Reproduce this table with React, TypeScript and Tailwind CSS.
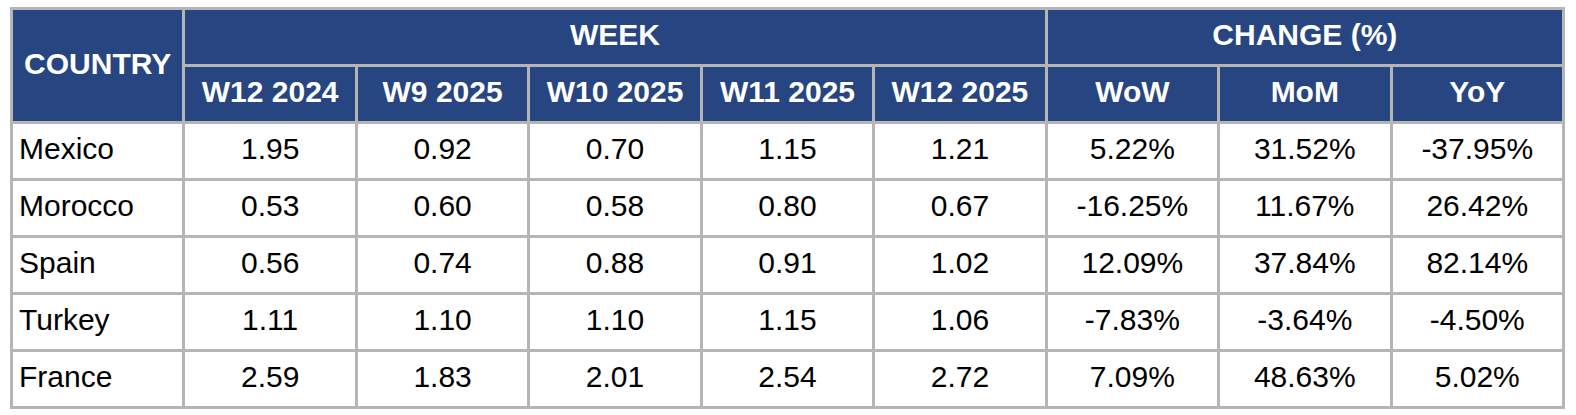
const weeks = ['W12 2024', 'W9 2025', 'W10 2025', 'W11 2025', 'W12 2025'];
const changes = ['WoW', 'MoM', 'YoY'];

const rows: [string, string[]][] = [
  ['Mexico', ['1.95', '0.92', '0.70', '1.15', '1.21', '5.22%', '31.52%', '-37.95%']],
  ['Morocco', ['0.53', '0.60', '0.58', '0.80', '0.67', '-16.25%', '11.67%', '26.42%']],
  ['Spain', ['0.56', '0.74', '0.88', '0.91', '1.02', '12.09%', '37.84%', '82.14%']],
  ['Turkey', ['1.11', '1.10', '1.10', '1.15', '1.06', '-7.83%', '-3.64%', '-4.50%']],
  ['France', ['2.59', '1.83', '2.01', '2.54', '2.72', '7.09%', '48.63%', '5.02%']],
];

const th = 'bg-[#274580] text-white font-bold text-center align-middle h-[54px] px-0 pt-0 pb-[4px]';
const td = 'bg-white text-black text-center align-middle h-[54px] px-0 pt-0 pb-[4px]';

export default function App() {
  return (
    <div className="min-h-screen bg-white pt-[7px] pl-[10px]" style={{ fontFamily: '"Liberation Sans", Arial, sans-serif' }}>
      <table className="w-[1555px] table-fixed border-separate border-spacing-[3px] bg-[#b5b5b5] text-[30px] leading-none">
        <thead>
          <tr>
            <th rowSpan={2} className={th}>COUNTRY</th>
            <th colSpan={5} className={th}>WEEK</th>
            <th colSpan={3} className={th}>CHANGE (%)</th>
          </tr>
          <tr>
            {weeks.map(w => <th key={w} className={th}>{w}</th>)}
            {changes.map(c => <th key={c} className={th}>{c}</th>)}
          </tr>
        </thead>
        <tbody>
          {rows.map(([country, vals]) => (
            <tr key={country}>
              <td className={`${td} text-left pl-[6px]`}>{country}</td>
              {vals.map((v, i) => <td key={i} className={td}>{v}</td>)}
            </tr>
          ))}
        </tbody>
      </table>
    </div>
  );
}
